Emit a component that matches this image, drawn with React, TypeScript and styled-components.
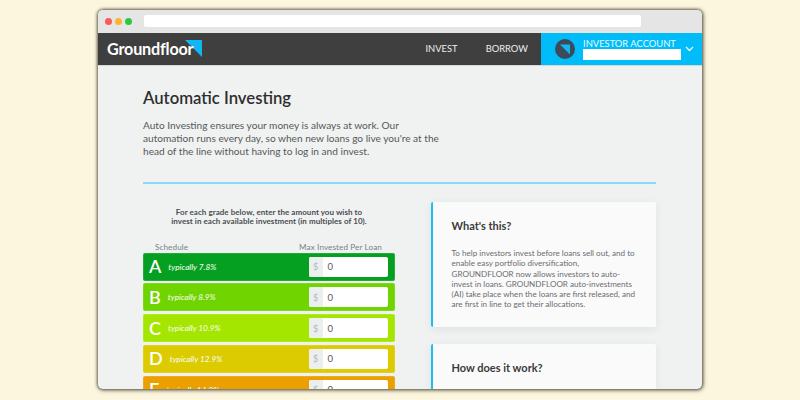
import React from "react";
import styled, { createGlobalStyle } from "styled-components";

const Global = createGlobalStyle`
  html, body { margin: 0; padding: 0; width: 800px; height: 400px; overflow: hidden; background: #fdf6df; font-family: Lato, "Open Sans", sans-serif; }
  * { box-sizing: border-box; }
`;
const Stage = styled.div`
  width: 800px; height: 400px; padding: 10px 98px 11px; overflow: hidden;
`;
const Win = styled.div`
  width: 604px; height: 379px; border-radius: 5px; overflow: hidden; background: #f0f2f2;
  display: flex; flex-direction: column;
  box-shadow: 0 0 3px 1px rgba(70,65,45,.75), 1px 1px 5px rgba(70,65,45,.5);
`;
const Chrome = styled.div`
  height: 23px; flex: none; background: #e5e5e5; display: flex; align-items: center; padding: 0 0 1px 7px;
`;
const Dot = styled.span<{ $c: string }>`
  width: 7px; height: 7px; border-radius: 50%; background: ${p => p.$c}; margin-right: 3px; flex: none;
`;
const Url = styled.div`
  width: 497px; height: 11.5px; background: #fff; border-radius: 2px; margin-left: 9px;
`;
const Header = styled.header`
  height: 33px; flex: none; background: #3f3f3f; display: flex; align-items: stretch; justify-content: space-between;
  border-bottom: 1px solid #d5d7d7;
`;
const Brand = styled.div`
  position: relative; display: flex; align-items: center; padding-left: 9px; padding-bottom: 1px;
  color: #fff; font-size: 16.2px; font-weight: 700; letter-spacing: -0.2px; width: 110px;
`;
const BrandName = styled.span`
  position: relative; z-index: 1;
`;
const BrandMark = styled.svg`
  position: absolute; left: 87px; top: 7px;
`;
const NavRight = styled.div`
  display: flex; align-items: stretch;
`;
const NavLink = styled.a`
  color: #eeeeee; font-size: 9.4px; display: flex; align-items: center; margin-right: 28px; padding-bottom: 1px;
  &:last-of-type { margin-right: 13px; }
`;
const Account = styled.div`
  width: 161px; background: #00bdf9; display: flex; align-items: center; padding-left: 14px;
`;
const AccountText = styled.div`
  margin-left: 8px; width: 98px; flex: none; display: flex; flex-direction: column; color: #eaf9ff; font-size: 9.4px; line-height: 10px; padding-top: 1px; white-space: nowrap;
`;
const AccountBar = styled.div`
  height: 11px; background: #fff;
`;
const Chevron = styled.svg`
  margin-left: 4px;
`;
const Main = styled.main`
  flex: 1; min-height: 0; padding: 0 46px 0 45px; overflow: hidden;
`;
const Title = styled.h1`
  margin: 21px 0 0; font-size: 16.7px; line-height: 22px; font-weight: 600; color: #2e2e2e;
`;
const Lead = styled.p`
  margin: 10px 0 0; width: 300px; font-size: 10.12px; line-height: 13px; color: #555858;
`;
const Rule = styled.div`
  margin: 24px 0 0; height: 2px; background: #86daf6;
`;
const Columns = styled.div`
  display: flex; justify-content: space-between; align-items: flex-start; margin-top: 18px;
`;
const Left = styled.section`
  width: 252px; flex: none;
`;
const Intro = styled.p`
  margin: 6px 0 0; text-align: center; font-size: 8px; line-height: 9.3px; font-weight: 700; color: #4a4d4f; letter-spacing: .05px;
`;
const Labels = styled.div`
  display: flex; justify-content: space-between; margin-top: 15px; padding: 0 13px 0 12px; font-size: 8.15px; line-height: 10px; color: #777f88; letter-spacing: .1px;
`;
const Rows = styled.div`
  display: flex; flex-direction: column; gap: 2.8px; margin-top: 1px;
`;
const Row = styled.div<{ $c: string }>`
  height: 28px; flex: none; border-radius: 2px; background: ${p => p.$c}; display: flex; align-items: center; padding: 0 2px 0 5px; color: #fff; border: 1px solid rgba(255,255,255,.12);
`;
const Grade = styled.span`
  font-size: 18px; line-height: 24px; flex: none; font-weight: 600; padding-bottom: 1px; margin-right: 7px;
`;
const Rate = styled.em`
  font-size: 8.2px; font-weight: 500; font-style: italic; flex: 1; color: #f4fbe8;
`;
const Field = styled.div`
  width: 79.5px; height: 20px; flex: none; margin-right: 4px; border-radius: 2px; background: #fff; display: flex; overflow: hidden; font-size: 9px;
`;
const Prefix = styled.span`
  width: 14px; background: #edefef; color: #a9bac8; display: flex; align-items: center; justify-content: center;
`;
const Value = styled.span`
  padding-left: 5px; display: flex; align-items: center; color: #55585a; font-size: 9.5px;
`;
const Right = styled.aside`
  width: 225px; flex: none; display: flex; flex-direction: column; gap: 17px;
`;
const Card = styled.article`
  background: #fafafa; border-left: 2.5px solid #1fbdf5; border-radius: 2px; padding: 17px 20px 17px 18.5px;
  box-shadow: 0 2px 8px rgba(60,70,70,.09);
`;
const CardTitle = styled.h2`
  margin: 0; font-size: 11px; line-height: 14px; font-weight: 700; color: #3a3a3a;
`;
const CardBody = styled.p`
  margin: 15px 0 0; font-size: 8.1px; line-height: 10.3px; color: #6a6d70;
`;

const grades = [
  { g: "A", r: "typically 7.8%", c: "#05a021", v: "0" },
  { g: "B", r: "typically 8.9%", c: "#6fd400", v: "0" },
  { g: "C", r: "typically 10.9%", c: "#a4e600", v: "0" },
  { g: "D", r: "typically 12.9%", c: "#dccb00", v: "0" },
  { g: "E", r: "typically 14.9%", c: "#eba000", v: "0" },
];

export default function App() {
  return (
    <Stage>
      <Global />
      <Win>
        <Chrome>
          <Dot $c="#fc5a56" />
          <Dot $c="#fdb42e" />
          <Dot $c="#2cc840" />
          <Url />
        </Chrome>
        <Header>
          <Brand>
            <BrandName>Groundfloor</BrandName>
            <BrandMark width="17" height="17" viewBox="0 0 17 17">
              <polygon points="0,0 17,0 17,17" fill="#12b6f3" />
            </BrandMark>
          </Brand>
          <NavRight>
            <NavLink>INVEST</NavLink>
            <NavLink>BORROW</NavLink>
            <Account>
              <svg width="20" height="20" viewBox="0 0 20 20">
                <circle cx="10" cy="10" r="10" fill="#3d4a59" />
                <polygon points="5,5.5 15,5.5 15,15.5" fill="#12b6f3" />
              </svg>
              <AccountText>
                INVESTOR ACCOUNT
                <AccountBar />
              </AccountText>
              <Chevron width="9" height="6" viewBox="0 0 9 6">
                <path d="M1 1l3.5 3.5L8 1" fill="none" stroke="#e8f9ff" strokeWidth="1.4" />
              </Chevron>
            </Account>
          </NavRight>
        </Header>
        <Main>
          <Title>Automatic Investing</Title>
          <Lead>
            Auto Investing ensures your money is always at work. Our automation runs every day, so when new loans go live you're at the head of the line without having to log in and invest.
          </Lead>
          <Rule />
          <Columns>
            <Left>
              <Intro>
                For each grade below, enter the amount you wish to
                <br />
                invest in each available investment (in multiples of 10).
              </Intro>
              <Labels>
                <span>Schedule</span>
                <span>Max Invested Per Loan</span>
              </Labels>
              <Rows>
                {grades.map(x => (
                  <Row key={x.g} $c={x.c}>
                    <Grade>{x.g}</Grade>
                    <Rate>{x.r}</Rate>
                    <Field>
                      <Prefix>$</Prefix>
                      <Value>{x.v}</Value>
                    </Field>
                  </Row>
                ))}
              </Rows>
            </Left>
            <Right>
              <Card>
                <CardTitle>What's this?</CardTitle>
                <CardBody>
                  To help investors invest before loans sell out, and to enable easy portfolio diversification, GROUNDFLOOR now allows investors to auto-invest in loans. GROUNDFLOOR auto-investments (AI) take place when the loans are first released, and are first in line to get their allocations.
                </CardBody>
              </Card>
              <Card>
                <CardTitle>How does it work?</CardTitle>
              </Card>
            </Right>
          </Columns>
        </Main>
      </Win>
    </Stage>
  );
}
